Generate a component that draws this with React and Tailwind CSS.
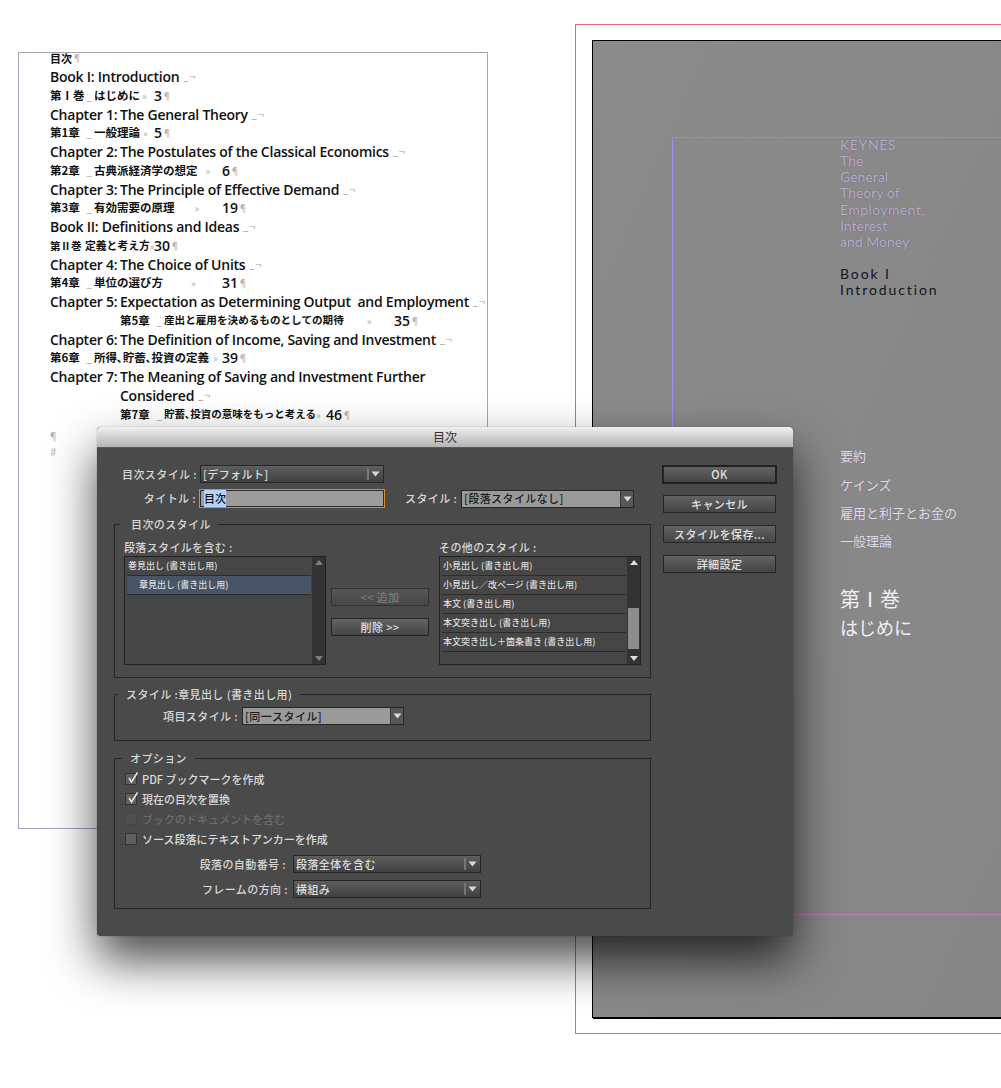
const jp = "font-['Noto_Sans_CJK_JP',sans-serif]"

const Arrow = () => (
  <svg width="9" height="6" viewBox="0 0 9 6" className="shrink-0">
    <path d="M0.5 0.5h8L4.5 5.5z" fill="#d9d9d9" />
  </svg>
)

const ArrowUp = ({ color = '#8c8c8c' }) => (
  <svg width="8" height="5" viewBox="0 0 8 5">
    <path d="M4 0l4 5H0z" fill={color} />
  </svg>
)

const ArrowDown = ({ color = '#8c8c8c' }) => (
  <svg width="8" height="5" viewBox="0 0 8 5">
    <path d="M0 0h8L4 5z" fill={color} />
  </svg>
)

const Tick = () => (
  <svg width="14" height="14" viewBox="0 0 14 14" className="absolute -top-[3px] left-[0px]">
    <path d="M3 7l2.5 4L11.5 1.5" fill="none" stroke="#e4e4e4" strokeWidth="1.6" />
  </svg>
)

function Select({ label, light, className }) {
  if (light) {
    return (
      <div className={`flex h-[18px] items-center border border-[#262626] bg-[#9a9a9a] pl-[2px] text-[#1d1d1d] ${className}`}>
        <span className="flex-1 truncate text-[11px] tracking-[0.4px]">{label}</span>
        <span className="flex h-full w-[13px] items-center justify-center border-l border-[#3a3a3a] bg-[#575757]">
          <Arrow />
        </span>
      </div>
    )
  }
  return (
    <div className={`flex h-[18px] items-center border border-[#262626] bg-gradient-to-b from-[#5e5e5e] to-[#404040] pl-[2px] pr-[3px] text-[#dcdcdc] ${className}`}>
      <span className="flex-1 truncate text-[11px] tracking-[0.4px]">{label}</span>
      <span className="mr-[2px] h-[12px] w-[2px] border-x border-[#777] bg-[#333]" />
      <Arrow />
    </div>
  )
}

function Button({ children, disabled, primary }) {
  return (
    <button
      type="button"
      className={`flex w-full items-center justify-center bg-gradient-to-b text-[11px] tracking-[0.4px] ${disabled ? 'h-[18px] border border-[#333] from-[#555] to-[#484848] text-[#7b7b7b]' : 'from-[#636363] to-[#454545] text-[#e2e2e2]'} ${!disabled && primary ? 'h-[19px] border-2 border-[#222]' : ''} ${!disabled && !primary ? 'h-[18px] border border-[#262626]' : ''}`}
    >
      {children}
    </button>
  )
}

function Legend({ children, className }) {
  return <legend className={`h-[14px] text-[11px] leading-[14px] tracking-[0.4px] text-[#d8d8d8] ${className}`}>{children}</legend>
}

function ListBox({ rows, selected, thumb }) {
  return (
    <div className="flex h-[109px] w-[202px] border border-[#222] bg-[#464646]">
      <div className="flex-1 pl-[2px] pr-[1px]">
        {rows.map((row) => (
          <div
            key={row.label}
            className={`flex h-[19px] items-center border-b border-[#2c2c2c] text-[9px] text-[#dedede] ${row.indent ? 'pl-[12px]' : 'pl-[1px]'} ${row.label === selected ? 'bg-[#475566]' : ''}`}
          >
            {row.label}
          </div>
        ))}
      </div>
      <div className="flex w-[13px] flex-col items-center bg-[#333] py-[3px]">
        <ArrowUp color={thumb ? '#e0e0e0' : '#7d7d7d'} />
        <div className="flex-1 self-stretch">
          {thumb && <div className="mx-[1px] mt-[43px] h-[41px] bg-[#8e8e8e]" />}
        </div>
        <ArrowDown color={thumb ? '#e0e0e0' : '#7d7d7d'} />
      </div>
    </div>
  )
}

function Check({ label, checked, disabled }) {
  return (
    <div className={`flex h-[20px] items-center gap-[5px] pl-[10px] text-[11px] ${disabled ? 'text-[#6d6d6d]' : 'text-[#dcdcdc]'}`}>
      <span className={`relative h-[12px] w-[12px] border ${disabled ? 'border-[#454545] bg-[#505050]' : 'border-[#333] bg-[#5f5f5f]'}`}>
        {checked && <Tick />}
      </span>
      {label}
    </div>
  )
}

function Dialog() {
  return (
    <div className={`absolute left-[97px] top-[427px] h-[509px] w-[696px] rounded-[4px] bg-[#4a4a4a] font-medium shadow-[0_24px_48px_rgba(0,0,0,0.72),0_0_1px_rgba(0,0,0,0.6)] ${jp}`}>
      <div className="flex h-[21px] items-center justify-center rounded-t-[4px] border-b border-[#5a5a5a] bg-gradient-to-b from-[#f0f0f0] to-[#b4b4b4] text-[12px] font-normal text-[#333]">
        目次
      </div>
      <div className="flex gap-[11px] pl-[17px] pr-[16px] pt-[17px]">
        <div className="w-[537px]">
          <div className="flex h-[18px] items-center">
            <span className="w-[83px] text-right text-[11px] tracking-[0.4px] text-[#d8d8d8]">目次スタイル :</span>
            <Select label="[デフォルト]" className="ml-[3px] w-[184px]" />
          </div>
          <div className="mt-[6px] flex h-[19px] items-center">
            <span className="w-[82px] text-right text-[11px] tracking-[0.4px] text-[#d8d8d8]">タイトル :</span>
            <div className="ml-[3px] flex h-[19px] w-[186px] items-center border border-[#e08a2e] bg-[#9c9c9c] pl-[3px] text-[11px] text-[#111] shadow-[inset_0_0_0_1px_#2e2e2e]">
              <span className="ml-[1px] bg-[#b3d4fc]">目次</span>
            </div>
            <span className="ml-[20px] w-[51px] whitespace-nowrap text-right text-[11px] tracking-[0.4px] text-[#d8d8d8]">スタイル :</span>
            <Select light label="[段落スタイルなし]" className="ml-[5px] w-[173px]" />
          </div>

          <fieldset className="mt-[9px] border border-[#262626] pb-[12px] pl-[9px]">
            <Legend className="ml-[-4px] pl-[11px] pr-[7px]">目次のスタイル</Legend>
            <div className="flex">
              <div>
                <div className="mt-[9px] h-[16px] text-[11px] leading-[14px] tracking-[0.35px] text-[#d8d8d8]">段落スタイルを含む :</div>
                <ListBox
                  selected="章見出し (書き出し用)"
                  rows={[{ label: '巻見出し (書き出し用)' }, { label: '章見出し (書き出し用)', indent: true }]}
                />
              </div>
              <div className="ml-[5px] mt-[57px] flex w-[98px] flex-col gap-[12px]">
                <Button disabled>{'<< 追加'}</Button>
                <Button>{'削除 >>'}</Button>
              </div>
              <div className="ml-[10px]">
                <div className="mt-[9px] h-[16px] text-[11px] leading-[14px] tracking-[0.4px] text-[#d8d8d8]">その他のスタイル :</div>
                <ListBox
                  thumb
                  rows={[
                    { label: '小見出し (書き出し用)' },
                    { label: '小見出し／改ページ (書き出し用)' },
                    { label: '本文 (書き出し用)' },
                    { label: '本文突き出し (書き出し用)' },
                    { label: '本文突き出し＋箇条書き (書き出し用)' },
                  ]}
                />
              </div>
            </div>
          </fieldset>

          <fieldset className="mt-[9px] border border-[#262626] pb-[15px]">
            <Legend className="ml-[3px] px-[8px]">スタイル :章見出し (書き出し用)</Legend>
            <div className="mt-[6px] flex items-center">
              <span className="w-[123px] text-right text-[11px] tracking-[0.4px] text-[#d8d8d8]">項目スタイル :</span>
              <Select light label="[同一スタイル]" className="ml-[4px] w-[162px]" />
            </div>
          </fieldset>

          <fieldset className="mt-[10px] border border-[#262626] pb-[10px]">
            <Legend className="ml-[7px] px-[8px]">オプション</Legend>
            <div className="pt-[4px]">
              <Check checked label="PDF ブックマークを作成" />
              <Check checked label="現在の目次を置換" />
              <Check disabled label="ブックのドキュメントを含む" />
              <Check label="ソース段落にテキストアンカーを作成" />
            </div>
            <div className="mt-[6px] flex items-center">
              <span className="w-[171px] text-right text-[11px] tracking-[0.4px] text-[#d8d8d8]">段落の自動番号 :</span>
              <Select label="段落全体を含む" className="ml-[7px] w-[188px]" />
            </div>
            <div className="mt-[7px] flex items-center">
              <span className="w-[173px] text-right text-[11px] tracking-[0.4px] text-[#d8d8d8]">フレームの方向 :</span>
              <Select label="横組み" className="ml-[5px] w-[188px]" />
            </div>
          </fieldset>
        </div>

        <div className="w-[115px]">
          <Button primary>OK</Button>
          <div className="mx-[1px] mt-[11px] flex flex-col gap-[12px]">
            <Button>キャンセル</Button>
            <Button>スタイルを保存...</Button>
            <Button>詳細設定</Button>
          </div>
        </div>
      </div>
    </div>
  )
}

const Pilcrow = () => <span className="font-normal text-[10px] text-[#b5b5b5]">¶</span>
const LineEnd = () => <span className="ml-[4px] font-normal text-[11px] tracking-[1px] text-[#9a9a9a]">_¬</span>

function EnLine({ head, children, indentTail }) {
  return (
    <div className="flex h-[18.75px] items-center whitespace-pre text-[14px] font-semibold tracking-[-0.25px] font-['Open_Sans',sans-serif]">
      {head && <span className="w-[70px] shrink-0">{head}</span>}
      {indentTail && <span className="w-[70px] shrink-0" />}
      <span>{children}</span>
      <LineEnd />
    </div>
  )
}

function JpLine({ head, title, num, titleWidth, indent, tab, size = 'text-[11.5px]', short }) {
  return (
    <div className={`flex h-[18.75px] items-center whitespace-nowrap text-[11.5px] font-bold ${jp} ${indent ? 'pl-[70px]' : ''}`}>
      <span className={`flex shrink-0 items-center ${short ? 'w-[35px] text-[10.5px]' : 'w-[44px]'}`}>
        {head}
        {!short && <span className="ml-auto mr-[2px] font-normal text-[10px] text-[#a0a0a0]">_</span>}
      </span>
      <span className={`flex shrink-0 items-center ${size} ${titleWidth}`}>
        {title}
        <span className={`font-normal text-[10px] text-[#b0b0b0] ${tab}`}>»</span>
      </span>
      <span className="text-[14px] font-semibold font-['Open_Sans',sans-serif]">{num}</span>
      <Pilcrow />
    </div>
  )
}

function TextFrame() {
  return (
    <div className="absolute left-[18px] top-[52px] h-[777px] w-[470px] border border-[#a5a3bd] pl-[31px] text-[#111]">
      <div className="-mt-[4.5px]">
        <div className={`flex h-[18.75px] items-center text-[11px] font-bold ${jp}`}>目次<Pilcrow /></div>
        <EnLine>Book I: Introduction</EnLine>
        <JpLine head="第Ⅰ巻" title="はじめに" num="3" titleWidth="w-[60px]" tab="ml-[2px]" />
        <EnLine head="Chapter 1:">The General Theory</EnLine>
        <JpLine head="第1章" title="一般理論" num="5" titleWidth="w-[60px]" tab="ml-[3px]" />
        <EnLine head="Chapter 2:">The Postulates of the Classical Economics</EnLine>
        <JpLine head="第2章" title="古典派経済学の想定" num="6" titleWidth="w-[128px]" tab="ml-[8px]" />
        <EnLine head="Chapter 3:">The Principle of Effective Demand</EnLine>
        <JpLine head="第3章" title="有効需要の原理" num="19" titleWidth="w-[128px]" tab="ml-[20px]" />
        <EnLine>Book II: Definitions and Ideas</EnLine>
        <JpLine short head="第Ⅱ巻" title="定義と考え方" num="30" titleWidth="w-[69px]" tab="ml-[0px]" size="text-[10.8px]" />
        <EnLine head="Chapter 4:">The Choice of Units</EnLine>
        <JpLine head="第4章" title="単位の選び方" num="31" titleWidth="w-[128px]" tab="ml-[28px]" />
        <EnLine head="Chapter 5:">Expectation as Determining Output  and Employment</EnLine>
        <JpLine indent head="第5章" title="産出と雇用を決めるものとしての期待" num="35" titleWidth="w-[230px]" tab="ml-[23px]" size="text-[10.6px]" />
        <EnLine head="Chapter 6:">The Definition of Income, Saving and Investment</EnLine>
        <JpLine head="第6章" title="所得､貯蓄､投資の定義" num="39" titleWidth="w-[128px]" tab="ml-[4px]" />
        <div className="flex h-[18.75px] items-center whitespace-nowrap text-[14px] font-semibold tracking-[-0.25px] font-['Open_Sans',sans-serif]">
          <span className="w-[70px] shrink-0">Chapter 7:</span>The Meaning of Saving and Investment Further
        </div>
        <EnLine indentTail>Considered</EnLine>
        <JpLine indent head="第7章" title="貯蓄､投資の意味をもっと考える" num="46" titleWidth="w-[162px]" tab="ml-[0px]" size="text-[10.5px]" />
        <div className="mt-[3px] h-[18px] text-[10px] leading-[18px] text-[#b5b5b5]">¶</div>
        <div className="h-[14px] text-[10px] leading-[14px] text-[#b5b5b5]">#</div>
      </div>
    </div>
  )
}

function Page() {
  return (
    <div className="absolute left-[575px] top-[24px] h-[1010px] w-[440px] border border-[#ef5f78] bg-white pl-[16px] pt-[15px]">
      <div className="relative h-[978px] w-[430px] border border-black bg-gradient-to-br from-[#8b8b8b] to-[#868686] shadow-[1px_1px_0_#000]">
        <div className="absolute left-[79px] top-[96px] h-[778px] w-[340px] border-y border-l border-y-[#c07ab8] border-l-[#9a90f0] pl-[167px]">
          <div className="-mt-[1px] text-[14px] leading-[16.15px] text-[#b8aec6] font-['Lato',sans-serif] [text-shadow:0_0_1px_#5c5570]">
            <div className="tracking-[0.6px]">KEYNES</div>
            <div>The</div>
            <div>General</div>
            <div>Theory of</div>
            <div className="tracking-[0.4px]">Employment,</div>
            <div>Interest</div>
            <div>and Money</div>
          </div>
          <div className="mt-[16px] text-[14px] leading-[16.15px] tracking-[1.9px] text-[#15131c] font-['Lato',sans-serif]">
            <div>Book I</div>
            <div>Introduction</div>
          </div>
          <div className="mt-[144px] text-[13px] leading-[28.3px] text-[#e2dcea] [text-shadow:0_0_1px_#6a6478] font-['Noto_Sans_CJK_JP',serif]">
            <div>要約</div>
            <div>ケインズ</div>
            <div>雇用と利子とお金の</div>
            <div>一般理論</div>
          </div>
          <div className="mt-[29px] text-[20px] leading-[28px] text-[#f2eef6] font-['Noto_Sans_CJK_JP',serif]">
            <div>第Ⅰ巻</div>
            <div className="text-[18px]">はじめに</div>
          </div>
        </div>
      </div>
    </div>
  )
}

export default function App() {
  return (
    <div className="relative h-[1088px] w-[1001px] overflow-hidden bg-white">
      <TextFrame />
      <Page />
      <Dialog />
    </div>
  )
}
